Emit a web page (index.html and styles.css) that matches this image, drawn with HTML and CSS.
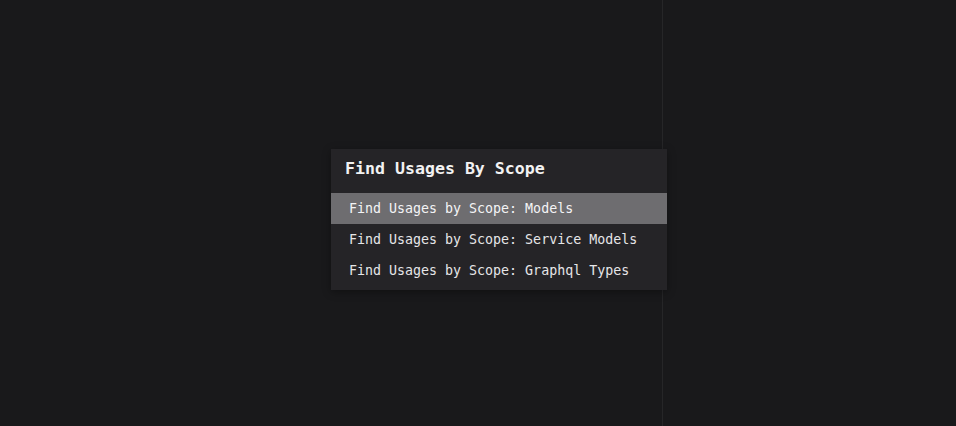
FILE: index.html
```html
<!DOCTYPE html>
<html>
<head>
<meta charset="utf-8">
<link rel="stylesheet" href="styles.css">
</head>
<body>
<div class="stage">
  <div class="divider"></div>
  <div class="popup">
    <div class="title">Find Usages By Scope</div>
    <ul class="list">
      <li class="item selected">Find Usages by Scope: Models</li>
      <li class="item">Find Usages by Scope: Service Models</li>
      <li class="item">Find Usages by Scope: Graphql Types</li>
    </ul>
  </div>
</div>
</body>
</html>
```
FILE: styles.css
```css
html, body {
  margin: 0;
  padding: 0;
  background: #19191b;
  width: 956px;
  height: 426px;
  overflow: hidden;
}
.stage {
  position: relative;
  width: 956px;
  height: 426px;
  display: flex;
  justify-content: flex-start;
  align-items: flex-start;
}
.divider {
  position: absolute;
  left: 662px;
  top: 0;
  width: 1px;
  height: 426px;
  background: #262628;
}
.popup {
  position: absolute;
  left: 331px;
  top: 149px;
  width: 336px;
  background: #252427;
  box-shadow: 0 2px 8px rgba(0,0,0,0.35);
  padding-bottom: 4px;
  font-family: "DejaVu Sans Mono", "Liberation Mono", monospace;
}
.title {
  height: 44px;
  line-height: 40px;
  padding-left: 14px;
  font-size: 16.6px;
  font-weight: bold;
  color: #f2f2f2;
}
.list {
  list-style: none;
  margin: 0;
  padding: 0;
}
.item {
  height: 31px;
  line-height: 31px;
  padding-left: 18px;
  font-size: 13.3px;
  color: #e6e6e8;
}
.item.selected {
  background: #6e6d70;
  color: #f4f4f6;
}
```
